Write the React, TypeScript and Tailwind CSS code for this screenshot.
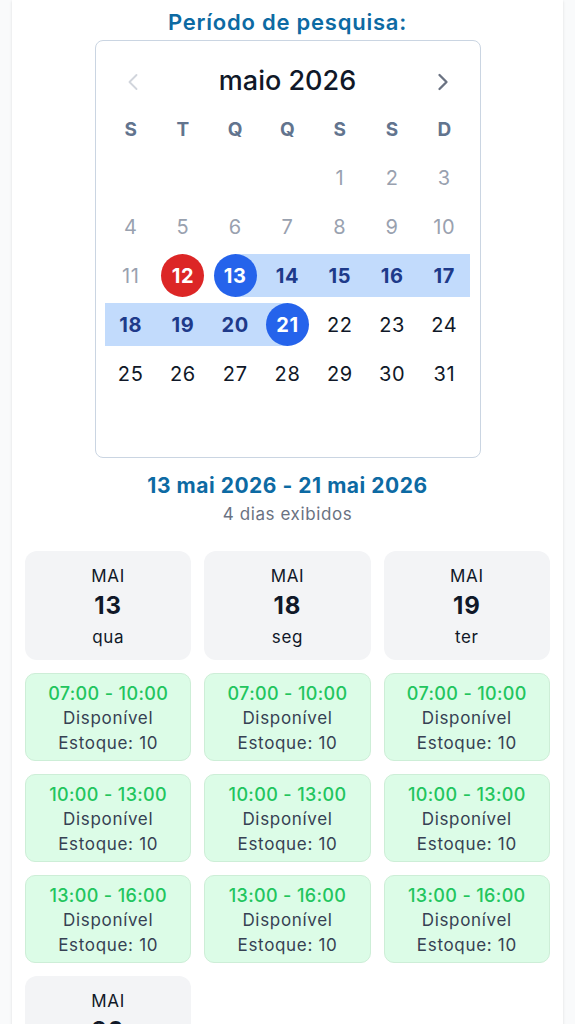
import { ChevronLeft, ChevronRight } from 'lucide-react'

type Day = { n: number; kind: 'past' | 'normal' | 'range' | 'start' | 'end' | 'today' } | null

const WEEKDAYS = ['S', 'T', 'Q', 'Q', 'S', 'S', 'D']

function buildWeeks(): Day[][] {
  const days: Day[] = [null, null, null, null]
  for (let n = 1; n <= 31; n++) {
    let kind: NonNullable<Day>['kind'] = 'normal'
    if (n <= 11) kind = 'past'
    else if (n === 12) kind = 'today'
    else if (n === 13) kind = 'start'
    else if (n === 21) kind = 'end'
    else if (n > 13 && n < 21) kind = 'range'
    days.push({ n, kind })
  }
  const weeks: Day[][] = []
  for (let i = 0; i < days.length; i += 7) weeks.push(days.slice(i, i + 7))
  return weeks
}

const SLOTS = ['07:00 - 10:00', '10:00 - 13:00', '13:00 - 16:00']

const COLUMNS = [
  { day: '13', weekday: 'qua', slots: SLOTS },
  { day: '18', weekday: 'seg', slots: SLOTS },
  { day: '19', weekday: 'ter', slots: SLOTS },
  { day: '20', weekday: 'qua', slots: SLOTS }
]

function DayCell({ day }: { day: Day }) {
  if (!day) return <div className="h-[43px]" />
  const { n, kind } = day
  const band =
    kind === 'range'
      ? 'bg-[#c2dbfc]'
      : kind === 'start'
        ? 'bg-gradient-to-r from-transparent from-50% to-[#c2dbfc] to-50%'
        : kind === 'end'
          ? 'bg-gradient-to-r from-[#c2dbfc] from-50% to-transparent to-50%'
          : ''
  let inner = 'text-gray-900'
  if (kind === 'past') inner = 'text-gray-400'
  if (kind === 'range') inner = 'font-bold text-[#1e3a8a]'
  if (kind === 'today') inner = 'rounded-full bg-[#dc2626] font-bold text-white'
  if (kind === 'start' || kind === 'end') inner = 'rounded-full bg-[#2563eb] font-bold text-white'
  return (
    <div className={`flex h-[43px] items-center justify-center ${band}`}>
      <span className={`flex h-[43px] w-[43px] items-center justify-center text-[20px] tracking-[0.03em] ${inner}`}>
        {n}
      </span>
    </div>
  )
}

function Calendar() {
  const weeks = buildWeeks()
  return (
    <div className="mx-auto mt-1 w-[386px] rounded-lg border border-slate-300 px-[9px] pb-[13px] pt-[19px]">
      <div className="flex h-[43px] items-center justify-between">
        <button type="button" className="flex w-[52px] justify-center pl-1 text-gray-300">
          <ChevronLeft className="h-7 w-7" strokeWidth={1.6} />
        </button>
        <div className="text-[27px] font-medium text-gray-900">maio 2026</div>
        <button type="button" className="flex w-[52px] justify-center pr-1 text-gray-500">
          <ChevronRight className="h-7 w-7" strokeWidth={2} />
        </button>
      </div>
      <div className="mt-[6px] grid grid-cols-7">
        {WEEKDAYS.map((w, i) => (
          <div key={i} className="flex h-[43px] items-center justify-center text-[19px] font-bold text-slate-500">
            {w}
          </div>
        ))}
      </div>
      <div className="mt-[4px] flex flex-col gap-[6px]">
        {weeks.map((week, i) => (
          <div key={i} className="grid grid-cols-7">
            {Array.from({ length: 7 }).map((_, j) => (
              <DayCell key={j} day={week[j] ?? null} />
            ))}
          </div>
        ))}
        <div className="h-[43px]" />
      </div>
    </div>
  )
}

export default function App() {
  return (
    <div className="min-h-screen bg-gray-50 px-3 font-['Inter',sans-serif]">
      <div className="min-h-screen bg-white px-[13px] pt-[8px] shadow-sm">
        <h2 className="text-center text-[22px] font-semibold leading-7 tracking-[0.035em] text-[#0d6aa3]">
          Período de pesquisa:
        </h2>
        <Calendar />
        <div className="mt-[14px] text-center text-[21px] font-bold leading-7 tracking-[0.025em] text-[#0d6aa3]">
          13 mai 2026 - 21 mai 2026
        </div>
        <div className="text-center text-[17px] leading-[28px] tracking-[0.035em] text-gray-500">4 dias exibidos</div>

        <div className="mt-[23px] grid grid-cols-3 gap-[13px]">
          {COLUMNS.map((col) => (
            <div key={col.day} className="flex flex-col gap-[13px]">
              <div className="h-[109px] rounded-xl bg-gray-100 pt-[13px] text-center text-gray-900">
                <div className="text-[17px] leading-6 tracking-[0.04em]">MAI</div>
                <div className="mt-[3px] text-[24px] font-bold leading-[30px] tracking-[0.04em]">{col.day}</div>
                <div className="mt-1 text-[17px] leading-6 tracking-[0.04em]">{col.weekday}</div>
              </div>
              {col.slots.map((s) => (
                <div
                  key={s}
                  className="h-[88px] rounded-[10px] border border-[#cdeed7] bg-[#dcfce7] pt-[7px] text-center"
                >
                  <div className="text-[18px] font-medium leading-[25px] tracking-[0.02em] text-[#22c55e]">{s}</div>
                  <div className="text-[17px] leading-[25px] tracking-[0.04em] text-gray-700">Disponível</div>
                  <div className="text-[17px] leading-[25px] tracking-[0.04em] text-gray-700">Estoque: 10</div>
                </div>
              ))}
            </div>
          ))}
        </div>
      </div>
    </div>
  )
}
